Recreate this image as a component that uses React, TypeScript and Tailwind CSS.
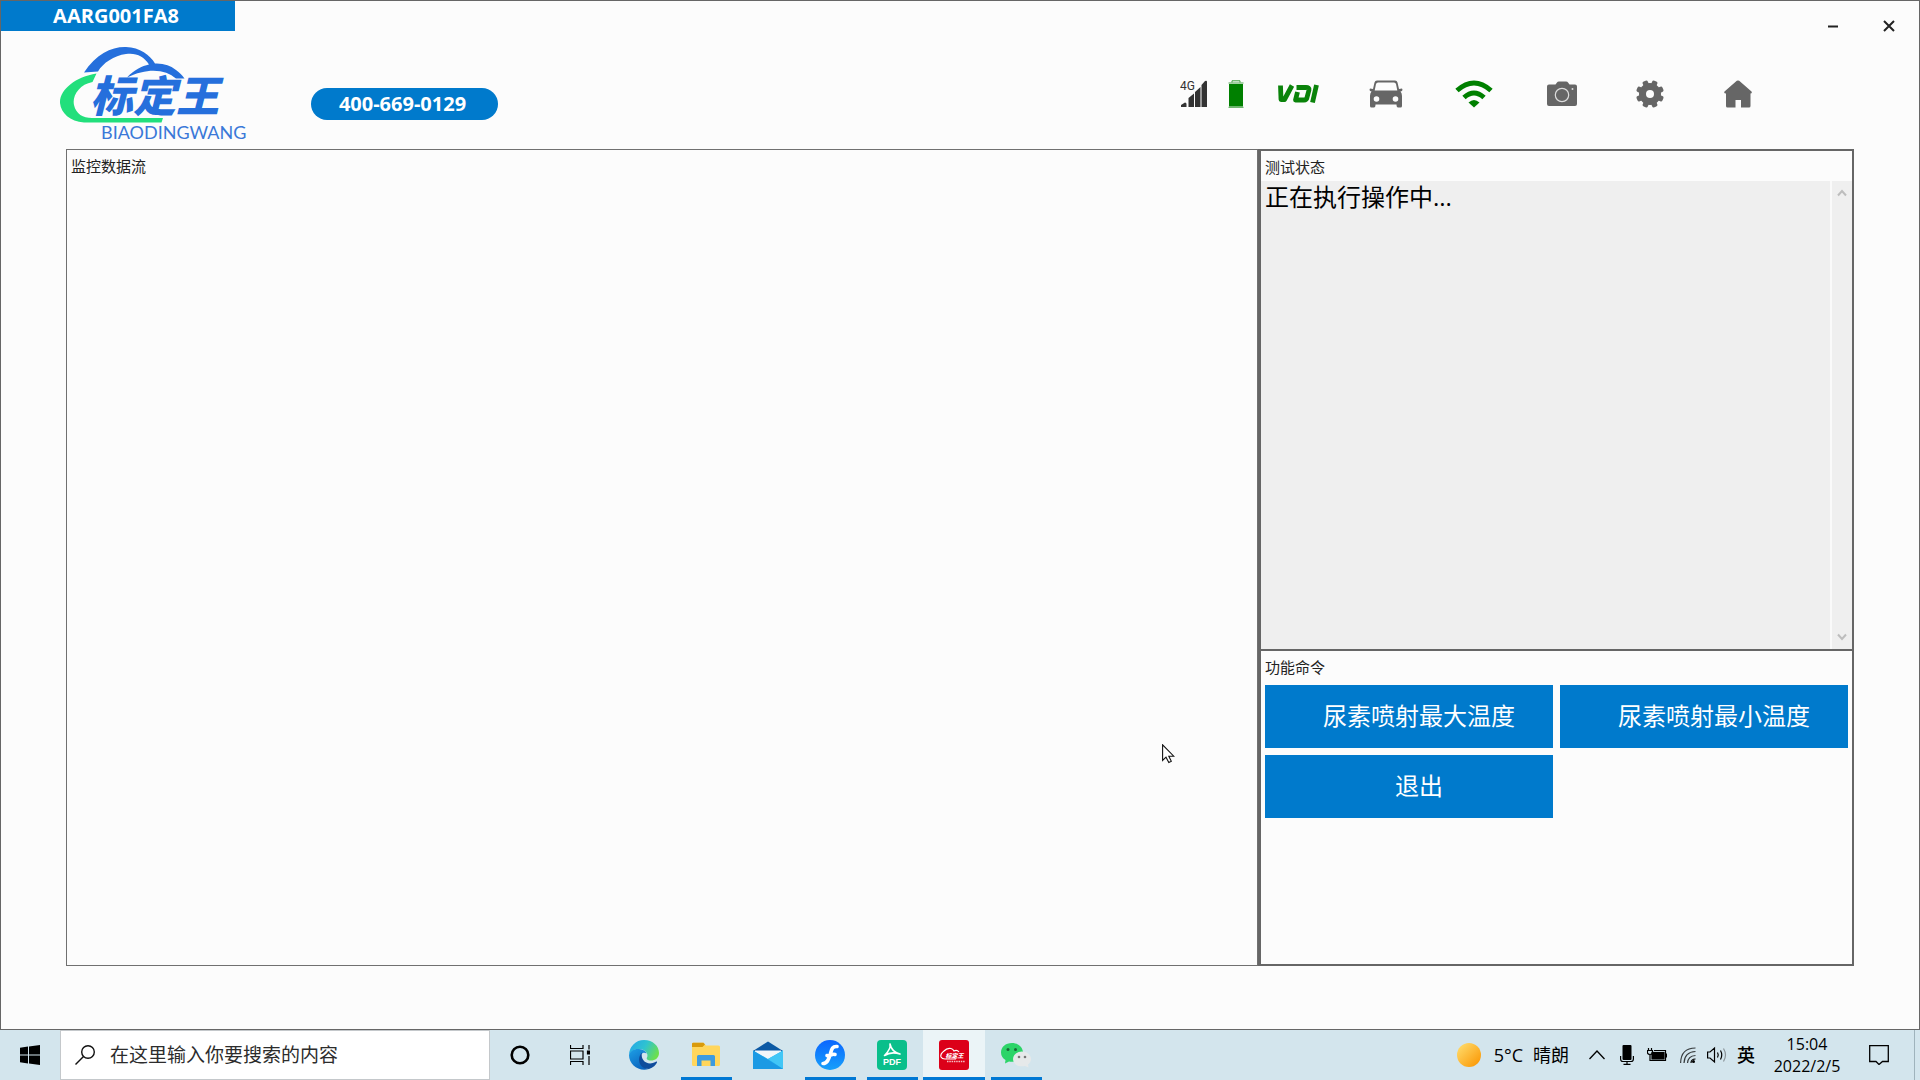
import React from "react";

const toothAngles = [0, 45, 90, 135].map((a) => a + 22.5);

function Logo() {
  return (
    <svg className="h-[100px] w-[192px] shrink-0" viewBox="60 44 192 100" role="img" aria-label="标定王 BIAODINGWANG">
      <path d="M84 72.500C96 54 112 46.500 126 47C140 47.500 150 55 155 63.500Q168 63 176 70Q182 74.500 184.500 78.500L176 78.500C166 69.500 148 67 127 77.500C134 70 142 66 149 64.500C144 56.500 136 52.500 126 54C114 55.500 103 63 98 71.500Z" fill="#256fdc" />
      <path d="M96.500 73.500L92.500 82C79 84.500 72 96 74 105C76 114 83 118 92 118H163L161.500 122.500H84C70 121.500 61 113 60 103C59.500 90 75 77 96.500 73.500Z" fill="#22df7c" />
      <text x="90" y="112" fontSize="43" fontWeight="900" fontStyle="italic" fontFamily="'Noto Sans CJK SC', sans-serif" fill="#256fdc">标定王</text>
      <text x="101" y="139" fontSize="18" fontFamily="Lato, sans-serif" fill="#3a78d8">BIAODINGWANG</text>
    </svg>
  );
}

function Signal4G() {
  return (
    <svg className="h-7 w-7" viewBox="0 0 28 28" fill="#333">
      <text x="0" y="10" fontSize="12" fontFamily="Roboto, sans-serif">4G</text>
      <path d="M1 27V25L5 22.500Q6.500 22.500 6.500 24V27ZM8.500 27V18L14 13.500V27ZM15 27V12L20.500 7V27ZM21.500 27V5L25 1Q27 0 27 2V27Z" />
    </svg>
  );
}

function Battery() {
  return (
    <svg className="h-7 w-4" viewBox="0 0 16 28">
      <path d="M4 2.500V.8H12V2.500" fill="none" stroke="#3f9d3f" />
      <path d="M.5 3H15.500M.5 27.300H15.500" stroke="#4aa34a" strokeWidth="1" />
      <path d="M1 4H15V26.500H1Z" fill="#008000" />
    </svg>
  );
}

function Vdi() {
  return (
    <svg className="h-5 w-[42px]" viewBox="0 0 42 20" fill="none" stroke="#0a830a" strokeWidth="4.800" strokeLinejoin="round">
      <path d="M3.500 1.500L4 15.500H7.500L15 1.500" />
      <path d="M19.500 3.500H29Q32.500 3.500 32 6L30 13.500Q29.500 16 27 16H18.500L20.500 8" />
      <path d="M39.500 1L35.500 18.500" />
    </svg>
  );
}

function Car() {
  return (
    <svg className="h-7 w-[34px]" viewBox="0 0 34 28">
      <path fillRule="evenodd" fill="#666" d="M8 .5H26Q28 .5 28.500 2.500L30 9L33 8.500Q34 9.500 33 11L31.500 11.500Q33 13 33 16V26Q33 27.500 31.500 27.500H29Q27.500 27.500 27.500 24.500H6.500Q6.500 27.500 5 27.500H2.500Q1 27.500 1 26V16Q1 13 2.500 11.500L1 11Q0 9.500 1 8.500L4 9L5.500 2.500Q6 .5 8 .5ZM9 2.500Q7.500 2.500 7 4L5.700 10.500H28.300L27 4Q26.500 2.500 25 2.500ZM7.500 16.200A2.800 2.800 0 1 0 7.500 21.800A2.800 2.800 0 1 0 7.500 16.200ZM26.500 16.200A2.800 2.800 0 1 0 26.500 21.800A2.800 2.800 0 1 0 26.500 16.200Z" />
    </svg>
  );
}

function Wifi() {
  return (
    <svg className="h-7 w-[38px]" viewBox="0 0 38 28" fill="none" stroke="#008000" strokeWidth="5">
      <path d="M2 10.500Q19-4.500 36 10.500" />
      <path d="M9 17.500Q19 8.500 29 17.500" />
      <path d="M13.500 22.500Q19 17.500 24.500 22.500L19 27.500Z" fill="#008000" stroke="none" />
    </svg>
  );
}

function Camera() {
  return (
    <svg className="h-7 w-[30px]" viewBox="0 0 30 28">
      <path d="M2 4.500H8.500L10 2.500Q10.500 1.500 12 1.500H19Q20.500 1.500 21 2.500L22.500 4.500H28Q30 4.500 30 6.500V24Q30 26 28 26H2Q0 26 0 24V6.500Q0 4.500 2 4.500Z" fill="#666" />
      <circle cx="15" cy="15" r="6.700" fill="none" stroke="#ddd" strokeWidth="1.200" />
      <circle cx="25.500" cy="9" r="1" fill="#ddd" />
    </svg>
  );
}

function Gear() {
  return (
    <svg className="size-7" viewBox="0 0 28 28">
      <circle cx="14" cy="14" r="11" fill="#666" />
      {toothAngles.map((a) => (
        <rect key={a} x="11.200" y="0" width="5.600" height="28" rx="1.800" fill="#666" transform={`rotate(${a} 14 14)`} />
      ))}
      <circle cx="14" cy="14" r="4" fill="#fcfcfc" />
    </svg>
  );
}

function Home() {
  return (
    <svg className="size-7" viewBox="0 0 28 28">
      <path d="M12.800.8Q14 0 15.200.8L27.500 11.500Q28.500 13.500 26.500 13.500V26Q26.500 27.500 25 27.500H17V20H11.500V27.500H3.500Q2 27.500 2 26V13.500Q-.5 13.500.5 11.500Z" fill="#666" />
    </svg>
  );
}

const tools = [
  { label: "4G 信号", width: "w-12", icon: <Signal4G /> },
  { label: "电量", width: "w-9", icon: <Battery /> },
  { label: "VDI", width: "w-22", icon: <Vdi /> },
  { label: "车辆", width: "w-22", icon: <Car /> },
  { label: "无线", width: "w-22", icon: <Wifi /> },
  { label: "拍照", width: "w-22", icon: <Camera /> },
  { label: "设置", width: "w-22", icon: <Gear /> },
  { label: "主页", width: "w-22", icon: <Home /> },
];

function Header() {
  return (
    <header className="flex items-start justify-between">
      <div>
        <div className="flex h-[30px] w-[234px] items-center justify-center bg-[#007acc] pr-1 text-xl font-bold text-white">AARG001FA8</div>
        <div className="flex items-center pt-[13px] pl-[59px]">
          <Logo />
          <a href="tel:400-669-0129" className="mt-5 ml-[59px] flex h-8 w-[187px] items-center justify-center rounded-2xl bg-[#007acc] pr-1 text-xl font-bold text-white">400-669-0129</a>
        </div>
      </div>
      <div>
        <div className="flex h-[50px] justify-end pr-[2px]">
          <button aria-label="最小化" className="flex w-14 items-center justify-center">
            <svg className="size-3" viewBox="0 0 12 12"><path d="M1 6.500H11" stroke="#222" strokeWidth="2" /></svg>
          </button>
          <button aria-label="关闭" className="flex w-14 items-center justify-center">
            <svg className="size-3" viewBox="0 0 12 12"><path d="M1 1L11 11M11 1L1 11" stroke="#222" strokeWidth="2" /></svg>
          </button>
        </div>
        <nav className="flex h-[86px] pr-[137px]">
          {tools.map((t) => (
            <button key={t.label} aria-label={t.label} className={`flex items-center justify-center ${t.width}`}>{t.icon}</button>
          ))}
        </nav>
      </div>
    </header>
  );
}

function ScrollArrow({ up }: { up?: boolean }) {
  return (
    <button aria-label={up ? "向上滚动" : "向下滚动"} className="flex h-6 w-full items-center justify-center">
      <svg className="size-[10px]" viewBox="0 0 10 10"><path d={up ? "M1 7.500L5 3L9 7.500" : "M1 2.500L5 7L9 2.500"} fill="none" stroke="#bdbdbd" strokeWidth="2" /></svg>
    </button>
  );
}

function Panels() {
  return (
    <main className="mt-[5px] mr-[65px] mb-[63px] ml-[65px] grid flex-1 grid-cols-[2fr_1fr] text-[#222]">
      <section className="border border-[#707070] px-1 pt-1">
        <h2 className="text-[15px] leading-6">监控数据流</h2>
      </section>
      <div className="grid grid-rows-[499fr_313fr] border-2 border-l-[3px] border-[#666]">
        <section className="flex flex-col border-b-2 border-[#666]">
          <h2 className="px-1 pt-1 pb-[2px] text-[15px] leading-6"><label htmlFor="status">测试状态</label></h2>
          <div className="flex flex-1 bg-[#efefef]">
            <textarea id="status" readOnly value="正在执行操作中..." className="flex-1 resize-none px-1 text-2xl leading-8 text-black outline-none" />
            <div className="flex w-[22px] flex-col justify-between border-l-2 border-[#fafafa]">
              <ScrollArrow up />
              <ScrollArrow />
            </div>
          </div>
        </section>
        <section className="px-1">
          <h2 className="pt-1 pb-[6px] text-[15px] leading-6">功能命令</h2>
          <div className="grid grid-cols-2 gap-[7px] text-2xl text-white">
            {["尿素喷射最大温度", "尿素喷射最小温度", "退出"].map((c) => (
              <button key={c} className="h-[63px] bg-[#007acc] pl-5">{c}</button>
            ))}
          </div>
        </section>
      </div>
    </main>
  );
}

function Edge() {
  return (
    <svg className="size-[30px]" viewBox="0 0 30 30">
      <defs>
        <linearGradient id="edgeTop" x1="0" x2="1" y1=".2" y2=".6"><stop stopColor="#24a8e8" /><stop offset=".5" stopColor="#2fc3d0" /><stop offset="1" stopColor="#6ee04a" /></linearGradient>
        <linearGradient id="edgeLeft" x1="0" x2=".6" y1="0" y2="1"><stop stopColor="#1ea0e6" /><stop offset="1" stopColor="#0a63bd" /></linearGradient>
      </defs>
      <path d="M0 15A15 15 0 0 1 15 0C24 0 30 6 30 13C30 18 26 20.500 22 20.500C18.500 20.500 17 19 18 17.500C20 14 16 9 10 9C5 9 1 12 0 15Z" fill="url(#edgeTop)" />
      <path d="M0 15C1 11 5 8.500 10 9C14 9.200 17 11.500 17.500 13.500C14 11.500 11 14.500 11 18C11 24 16 29 20 29C10 32 0 25 0 15Z" fill="url(#edgeLeft)" />
      <path d="M13 12.500C8 17 9 29 20 29C24 27.500 27 25 28 22.500C28.300 21.500 27.500 21.300 26.500 22C19 26 11 21 13 12.500Z" fill="#0f4c9c" />
    </svg>
  );
}

function Explorer() {
  return (
    <svg className="h-[26px] w-7" viewBox="0 0 28 26">
      <path d="M0 4.500V2Q0 .8 1.200.8H11.500L14 3.500H26.500Q28 3.500 28 5V22.500Q28 24 26.500 24H1.500Q0 24 0 22.500Z" fill="#ffd65c" />
      <path d="M0 5V2Q0 .8 1.200.8H11.500L13 2.500L10.500 5Z" fill="#d99a0b" />
      <path d="M5 24V14.500Q5 13 6.500 13H21.500Q23 13 23 14.500V24H18.500V18.500H9.500V24Z" fill="#3c9be0" />
    </svg>
  );
}

function Mail() {
  return (
    <svg className="h-7 w-[30px]" viewBox="0 0 30 28">
      <path d="M0 10L15 .5L30 10V13H0Z" fill="#0c59a4" />
      <path d="M2 9.500H28V15L15 22L2 15Z" fill="#f2f6fa" />
      <path d="M0 9.500L15 18L30 9.500V28H0Z" fill="#28b1ee" />
      <path d="M15 18L30 9.500V28Z" fill="#42c6f6" />
      <path d="M0 9.500L30 28H0Z" fill="#1c9ae4" />
    </svg>
  );
}

function FlashCircle() {
  return (
    <svg className="size-[30px]" viewBox="0 0 30 30">
      <defs><linearGradient id="blueBall" x1="0" x2="0" y1="0" y2="1"><stop stopColor="#0b66ff" /><stop offset="1" stopColor="#17a0fa" /></linearGradient></defs>
      <circle cx="15" cy="15" r="15" fill="url(#blueBall)" />
      <path d="M22 6.500C17 6 16.500 10 15 15C13.500 20 12 23.500 8 23.500M12 15.500C14.500 16.500 17 13.500 20 14.500" fill="none" stroke="#fff" strokeWidth="3.600" strokeLinecap="round" />
    </svg>
  );
}

function Pdf() {
  return (
    <svg className="size-[30px]" viewBox="0 0 30 30">
      <rect width="30" height="30" rx="4" fill="#0abf8b" />
      <path d="M13 4C14 9 17 12.500 23 14C17 12 12 12.500 7.500 15.500C11 12 14 8 13 4Z" fill="none" stroke="#fff" strokeWidth="1.600" strokeLinejoin="round" />
      <text x="15" y="25" textAnchor="middle" fontSize="9" fontWeight="700" fontFamily="'Liberation Sans', sans-serif" fill="#fff">PDF</text>
    </svg>
  );
}

function RedApp() {
  return (
    <svg className="size-[30px]" viewBox="0 0 30 30">
      <rect width="30" height="30" rx="3" fill="#dc0019" />
      <path d="M5 11Q8 7.500 12 8.500Q14 9 15 11Q18 9.500 20 12M5 11Q1 14 2 17Q3 19 6 19H17" fill="none" stroke="#fff" strokeWidth="1.200" />
      <text x="6.500" y="17.500" fontSize="6" fontWeight="900" fontStyle="italic" fontFamily="'Noto Sans CJK SC', sans-serif" fill="#fff">标定王</text>
      <path d="M8 21.500H26" stroke="#fff" strokeWidth="1.300" strokeDasharray="1.500 .8" opacity=".75" />
    </svg>
  );
}

function WeChat() {
  return (
    <svg className="h-[26px] w-8" viewBox="0 0 32 26">
      <path d="M12 1C5.500 1 1 5 1 10.500C1 14 3 16.500 5.500 18L5 21.500L9 19.500C16 20.500 23 17 23 10.500C23 5 18 1 12 1Z" fill="#2cd468" />
      <circle cx="8" cy="7.500" r="1.500" fill="#1a6638" /><circle cx="15.500" cy="7.500" r="1.500" fill="#1a6638" />
      <path d="M22 9.500C17 9.500 13 13 13 17C13 22 18 25.500 25 24L28.500 25.500L28 22.500C30 21 31 19 31 17C31 13 27 9.500 22 9.500Z" fill="#e6e9ea" />
      <circle cx="19" cy="15" r="1.300" fill="#777" /><circle cx="25" cy="15" r="1.300" fill="#777" />
    </svg>
  );
}

function TaskView() {
  return (
    <svg className="size-5" viewBox="0 0 20 20" fill="none" stroke="#000" strokeWidth="1.200">
      <path d="M.5 0V3.500H13V0M.5 20V16.500H13V20M.5 6H13V14H.5ZM19 0V4.500M19 11V20" />
      <path d="M17.500 6H20V9H17.500Z" fill="#000" />
    </svg>
  );
}

const apps = [
  { label: "Edge", icon: <Edge />, open: false },
  { label: "文件资源管理器", icon: <Explorer />, open: true },
  { label: "邮件", icon: <Mail />, open: false },
  { label: "浏览器", icon: <FlashCircle />, open: true },
  { label: "PDF", icon: <Pdf />, open: true },
  { label: "标定王", icon: <RedApp />, open: true, active: true },
  { label: "微信", icon: <WeChat />, open: true },
];

function Taskbar() {
  return (
    <footer className="flex h-[50px] items-stretch bg-[#d3e5ed] text-black">
      <button aria-label="开始" className="flex w-[60px] items-center justify-center">
        <svg className="size-5" viewBox="0 0 20 20"><path d="M0 2.800L8 1.600V9.500H0ZM9 1.400L20 0V9.500H9ZM0 10.500H8V18.400L0 17.300ZM9 10.500H20V20L9 18.600Z" /></svg>
      </button>
      <div className="flex w-[430px] items-center border border-[#c4c8cb] bg-white pl-[14px]">
        <svg className="size-5" viewBox="0 0 20 20" fill="none" stroke="#111" strokeWidth="1.400"><circle cx="13" cy="7" r="6.300" /><path d="M8.500 11.500L.5 19.500" /></svg>
        <input aria-label="搜索" placeholder="在这里输入你要搜索的内容" className="ml-[15px] flex-1 text-[19px] outline-none placeholder:text-[#2c2c2c]" />
      </div>
      <button aria-label="Cortana" className="flex w-[60px] items-center justify-center">
        <svg className="size-5" viewBox="0 0 20 20"><circle cx="10" cy="10" r="8.300" fill="none" stroke="#000" strokeWidth="2.600" /></svg>
      </button>
      <button aria-label="任务视图" className="flex w-[60px] items-center justify-center"><TaskView /></button>
      <div className="ml-[3px] flex">
        {apps.map((a) => (
          <button key={a.label} aria-label={a.label} className={`flex w-[62px] flex-col items-center ${a.active ? "bg-[#ebf4f7]" : ""}`}>
            <span className="flex flex-1 items-center pt-[3px]">{a.icon}</span>
            <span className={`h-[3px] ${a.active ? "w-full" : "w-[51px]"} ${a.open ? "bg-[#0078d4]" : ""}`} />
          </button>
        ))}
      </div>
      <div className="ml-auto flex items-center">
        <button className="flex items-center text-lg">
          <svg className="mr-[13px] size-6" viewBox="0 0 24 24">
            <defs><linearGradient id="sun" x1=".1" x2=".9" y1=".1" y2=".9"><stop stopColor="#ffd968" /><stop offset="1" stopColor="#fb9a08" /></linearGradient></defs>
            <circle cx="12" cy="12" r="12" fill="url(#sun)" />
          </svg>
          <span className="mr-[10px]">5°C</span>
          <span>晴朗</span>
        </button>
        <button aria-label="显示隐藏的图标" className="ml-5">
          <svg className="h-5 w-4" viewBox="0 0 16 20" fill="none" stroke="#000" strokeWidth="1.300"><path d="M.5 14L8 6L15.500 14" /></svg>
        </button>
        <svg className="ml-[15px] h-5 w-[14px]" viewBox="0 0 14 20"><rect x="2.500" width="9" height="15" rx="1" /><path d="M.6 11V14Q.6 16.500 3 16.500H11Q13.400 16.500 13.400 14V11M7 16.500V19.400M3.500 19.400H10.500" fill="none" stroke="#000" strokeWidth="1.200" /></svg>
        <svg className="ml-[13px] h-5 w-5" viewBox="0 0 20 20" fill="none" stroke="#000" strokeWidth="1.200"><path d="M1.500 3V5.500M4.500 3V5.500M.5 5.500H5.500V8Q5 9.500 3 9.500Q1 9.500 .5 8ZM3 9.500V15.500H18.500V5.500H7M19.500 8.500V12.500" /><rect x="5" y="7.500" width="12" height="6.500" fill="#000" /></svg>
        <svg className="ml-[13px] h-5 w-4" viewBox="0 0 16 20" fill="none" stroke="#000" strokeWidth="1.200"><path d="M.6 18Q1 3 15.500 3M4 18Q4.500 7 15.500 6.500M7.500 18Q8 11 15.500 10.500" opacity=".75" /><path d="M11 18Q11 14 15.500 14" /><circle cx="13.500" cy="16.500" r="1.500" fill="#000" stroke="none" /></svg>
        <svg className="ml-[11px] h-5 w-5" viewBox="0 0 20 20" fill="none" stroke="#000" strokeWidth="1.200"><path d="M.6 7H3L7.500 3V17L3 13H.6ZM10.500 7.500Q12 10 10.500 12.500M13.500 5.500Q16 10 13.500 14.500" /><path d="M16.500 3.500Q20.500 10 16.500 16.500" stroke="#8a9499" /></svg>
        <button className="ml-[10px] text-lg font-medium">英</button>
        <button className="ml-4 w-[72px] text-center text-base leading-[22px] whitespace-nowrap"><time>15:04<br />2022/2/5</time></button>
        <button aria-label="通知" className="mr-[25px] ml-[26px]">
          <svg className="size-5" viewBox="0 0 20 20" fill="none" stroke="#000" strokeWidth="1.300"><path d="M.7 .7H19.300V16.500H13.500L10 19.500L7 16.500H.7Z" /></svg>
        </button>
        <span className="h-[50px] w-[6px] border-l border-[#9fb3bc]" />
      </div>
    </footer>
  );
}

export default function App() {
  return (
    <div className="relative flex min-h-screen flex-col font-['Open_Sans','Noto_Sans_CJK_SC',sans-serif]">
      <div className="flex flex-1 flex-col border border-[#666] bg-[#fcfcfc]">
        <Header />
        <Panels />
      </div>
      <Taskbar />
      <svg className="pointer-events-none absolute top-[744px] left-[1162px] h-5 w-[13px]" viewBox="0 0 13 20"><path d="M.6 .8V16.500L4 13.200L6.800 18.500L9.300 17.300L6.800 12.200H11.800Z" fill="#fff" stroke="#111" strokeWidth="1.100" /></svg>
    </div>
  );
}
